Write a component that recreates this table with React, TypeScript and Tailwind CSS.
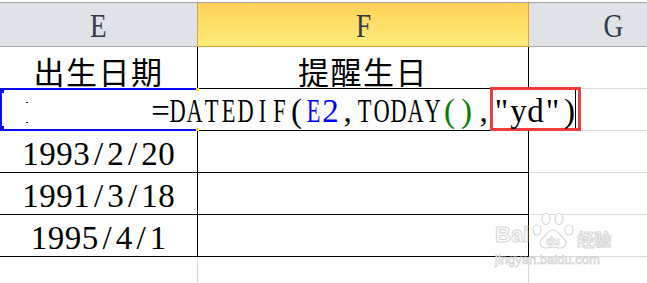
import clsx from "clsx";

// half-width glyph cell, like a CJK sheet font renders latin text
function Glyphs({ text, className }: { text: string; className?: string }) {
  return (
    <>
      {Array.from(text).map((ch, i) => (
        <span
          key={i}
          className={clsx(
            "flex w-[17px] shrink-0 justify-center leading-none",
            /[A-Z]/.test(ch) && "scale-x-[0.68]",
            className
          )}
        >
          {ch}
        </span>
      ))}
    </>
  );
}

const DATES = ["1993/2/20", "1991/3/18", "1995/4/1"];

function ColHeader({ letter, className }: { letter: string; className: string }) {
  return (
    <div
      className={clsx(
        "flex h-[44px] shrink-0 items-end justify-center pb-[3px] text-[34px] leading-none text-[#333a4a]",
        className
      )}
    >
      <span className="scale-x-[0.8]">{letter}</span>
    </div>
  );
}

export default function App() {
  return (
    <div className="relative h-[283px] w-[647px] overflow-hidden bg-white font-['Liberation_Serif',serif] text-black">
      {/* column headers */}
      <div className="mt-[2px] flex border-t border-[#a0a0a0]">
        <ColHeader letter="E" className="w-[197px] border-b border-[#a9a9a9] bg-[#dfe2e6]" />
        <ColHeader
          letter="F"
          className="w-[332px] border-x border-b border-[#dfa23a] bg-gradient-to-b from-[#fed257] to-[#ffec7b]"
        />
        <ColHeader letter="G" className="w-[168px] border-b border-[#a9a9a9] bg-[#dfe2e6]" />
      </div>

      {/* title row */}
      <div className="flex h-[42px]">
        <div className="flex w-[198px] shrink-0 items-end justify-center border-r border-b border-black pb-[2px] font-['Noto_Sans_CJK_SC',sans-serif] text-[31px] leading-none tracking-[1.5px]">
          出生日期
        </div>
        <div className="flex w-[331px] shrink-0 items-end justify-center border-r border-b border-black pb-[2px] font-['Noto_Sans_CJK_SC',sans-serif] text-[31px] leading-none tracking-[1.5px]">
          提醒生日
        </div>
        <div className="w-[168px] shrink-0 border-b border-[#d9d9d9]" />
      </div>

      {/* row being edited */}
      <div className="relative flex h-[42px]">
        <div className="relative z-10 flex w-[198px] shrink-0 items-end border-b border-black pb-[2px] pl-[152px] text-[33px]">
          <div className="flex items-end whitespace-nowrap">
            <Glyphs text="=DATEDIF(" />
            <Glyphs text="E2" className="text-[#0000ff]" />
            <Glyphs text=",TODAY" />
            <Glyphs text="()" className="text-[#008000]" />
            <Glyphs text="," />
            <span className="relative -mb-[3px] -ml-[2px] flex h-[44px] items-end border-[3px] border-[#f03c3c]">
              <Glyphs text={'"yd")'} />
              <span className="absolute top-0 right-[2px] bottom-0 w-px bg-black" />
            </span>
          </div>
          <span className="absolute top-[13px] left-[26px] h-px w-[2px] bg-[#222]" />
          <span className="absolute top-[33px] left-[26px] h-px w-[2px] bg-[#222]" />
        </div>
        <div className="w-[331px] shrink-0 border-b border-black" />
        <div className="w-[168px] shrink-0 border-b border-[#d9d9d9]" />

        {/* selection frame */}
        <div className="pointer-events-none absolute top-[-1px] left-0 z-20 h-[43px] w-[198px] border-y-2 border-l-2 border-[#0a0aff]">
          <span className="absolute top-[-2px] left-[-2px] h-[5px] w-[4px] bg-[#0a0aff]" />
          <span className="absolute bottom-[-2px] left-[-2px] h-[5px] w-[4px] bg-[#0a0aff]" />
          <span className="absolute top-[-2px] right-[-1px] h-[3px] w-[3px] bg-[#f5e000]" />
          <span className="absolute right-[-1px] bottom-[-2px] h-[3px] w-[3px] bg-[#f5e000]" />
        </div>
      </div>

      {DATES.map((d) => (
        <div key={d} className="flex h-[42px]">
          <div className="flex w-[198px] shrink-0 items-end justify-center border-r border-b border-black pb-[1px] text-[33px]">
            <Glyphs text={d} />
          </div>
          <div className="w-[331px] shrink-0 border-r border-b border-black" />
          <div className="w-[168px] shrink-0 border-b border-[#d9d9d9]" />
        </div>
      ))}

      <div className="flex h-[30px]">
        <div className="w-[198px] shrink-0 border-r border-[#d9d9d9]" />
        <div className="w-[331px] shrink-0 border-r border-[#d9d9d9]" />
      </div>

      {/* site watermark */}
      <div className="pointer-events-none absolute top-[212px] left-[495px] text-[#d0d0d0]">
        <div className="flex items-end">
          <span className="mb-[4px] font-['Liberation_Sans',sans-serif] text-[22px] leading-none font-bold text-white [-webkit-text-stroke:1px_#d6d6d6]">
            Bai
          </span>
          <svg width="48" height="38" viewBox="0 0 48 38" fill="white" stroke="#d6d6d6" strokeWidth="1.2">
            <ellipse cx="8" cy="18" rx="4" ry="5" />
            <ellipse cx="17" cy="7" rx="4" ry="5.5" />
            <ellipse cx="30" cy="7" rx="4" ry="5.5" />
            <ellipse cx="40" cy="18" rx="4" ry="5" />
            <path d="M24 18c-5 0-7 5-11 9-4 4-1 9 4 9 3 0 5-1 7-1s4 1 7 1c5 0 8-5 4-9-4-4-6-9-11-9z" />
            <text x="24" y="33" textAnchor="middle" fontFamily="Liberation Sans, sans-serif" fontSize="11" fontWeight="700" fill="white" stroke="#d6d6d6" strokeWidth="0.8">
              du
            </text>
          </svg>
          <span className="mb-[3px] font-['Noto_Sans_CJK_SC',sans-serif] text-[17px] leading-none font-bold text-white [-webkit-text-stroke:1px_#d6d6d6]">
            经验
          </span>
        </div>
        <div className="mt-[3px] font-['Liberation_Sans',sans-serif] text-[13px] leading-none text-white [-webkit-text-stroke:0.8px_#d6d6d6]">
          jingyan.baidu.com
        </div>
      </div>
    </div>
  );
}
